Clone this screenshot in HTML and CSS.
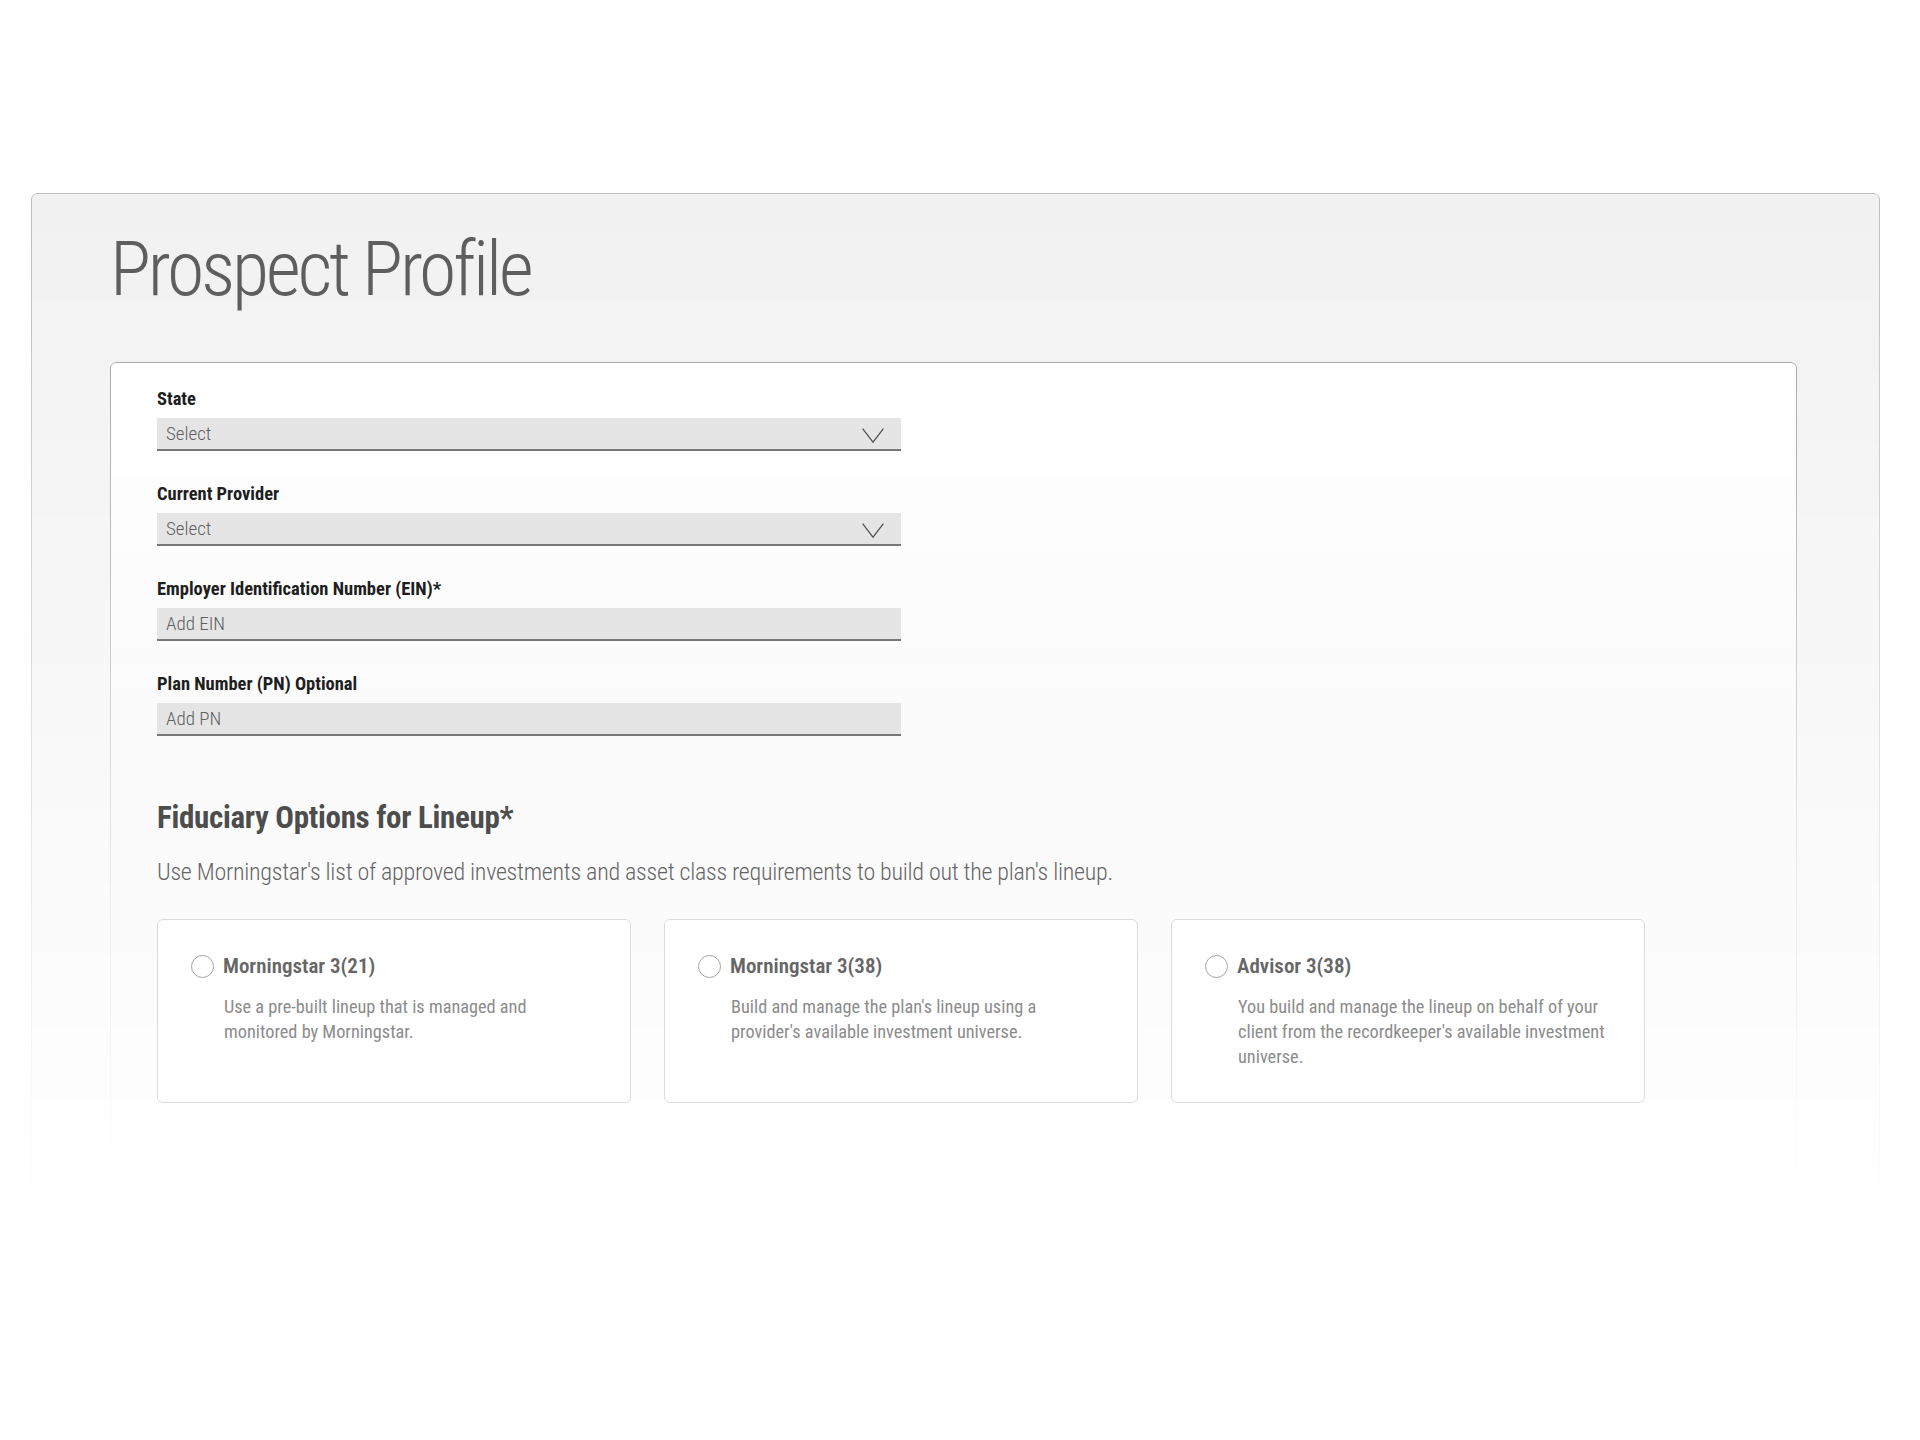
FILE: index.html
```html
<!DOCTYPE html>
<html lang="en">
<head>
<meta charset="utf-8">
<title>Prospect Profile</title>
<link rel="stylesheet" href="styles.css">
</head>
<body>
<main class="page-card">
  <h1 class="page-title">Prospect Profile</h1>
  <section class="form-card">
    <div class="fields">
      <div class="field">
        <label class="field-label">State</label>
        <div class="select-box">
          <span class="field-value">Select</span>
          <svg class="chevron" width="22" height="15" viewBox="0 0 22 15"><polyline points="0.6,0.6 11,14.2 21.4,0.6" fill="none" stroke="#555" stroke-width="1.3"/></svg>
        </div>
      </div>
      <div class="field">
        <label class="field-label">Current Provider</label>
        <div class="select-box">
          <span class="field-value">Select</span>
          <svg class="chevron" width="22" height="15" viewBox="0 0 22 15"><polyline points="0.6,0.6 11,14.2 21.4,0.6" fill="none" stroke="#555" stroke-width="1.3"/></svg>
        </div>
      </div>
      <div class="field">
        <label class="field-label">Employer Identification Number (EIN)*</label>
        <div class="select-box"><span class="field-value">Add EIN</span></div>
      </div>
      <div class="field">
        <label class="field-label">Plan Number (PN) Optional</label>
        <div class="select-box"><span class="field-value">Add PN</span></div>
      </div>
    </div>

    <h2 class="section-title">Fiduciary Options for Lineup*</h2>
    <p class="section-desc">Use Morningstar's list of approved investments and asset class requirements to build out the plan's lineup.</p>

    <div class="options">
      <div class="option-card">
        <div class="option-head"><span class="radio"></span><span class="option-title">Morningstar 3(21)</span></div>
        <p class="option-desc">Use a pre-built lineup that is managed and monitored by Morningstar.</p>
      </div>
      <div class="option-card">
        <div class="option-head"><span class="radio"></span><span class="option-title">Morningstar 3(38)</span></div>
        <p class="option-desc">Build and manage the plan's lineup using a provider's available investment universe.</p>
      </div>
      <div class="option-card">
        <div class="option-head"><span class="radio"></span><span class="option-title">Advisor 3(38)</span></div>
        <p class="option-desc">You build and manage the lineup on behalf of your client from the recordkeeper's available investment universe.</p>
      </div>
    </div>
  </section>
</main>
</body>
</html>
```

FILE: styles.css
```css
* { box-sizing: border-box; }

html, body {
  margin: 0;
  padding: 0;
  background: #ffffff;
}

body {
  font-family: "Roboto", "Liberation Sans", sans-serif;
  font-stretch: 75%;
  color: #333;
}

.page-card {
  position: relative;
  z-index: 0;
  margin: 193px 40px 0 31px;
  padding: 38px 83px 4px 79px;
}

.page-card::before {
  content: "";
  position: absolute;
  inset: 0;
  z-index: -1;
  border: 1px solid #bdbdbd;
  border-radius: 6px;
  background: #f1f1f1;
  -webkit-mask-image: linear-gradient(to bottom, #000 0%, rgba(0,0,0,0.6) 40%, transparent 100%);
  mask-image: linear-gradient(to bottom, #000 0%, rgba(0,0,0,0.6) 40%, transparent 100%);
}

.page-title {
  margin: 0 0 55px 0;
  font-weight: 300;
  font-size: 76px;
  line-height: 76px;
  letter-spacing: -3.1px;
  color: #5e5e5e;
}

.form-card {
  position: relative;
  z-index: 0;
  padding: 26px 47px 100px 47px;
}

.form-card::before {
  content: "";
  position: absolute;
  inset: 0;
  z-index: -1;
  border: 1px solid #a8a8a8;
  border-radius: 6px;
  background: #ffffff;
  -webkit-mask-image: linear-gradient(to bottom, #000 0%, rgba(0,0,0,0.15) 65%, transparent 100%);
  mask-image: linear-gradient(to bottom, #000 0%, rgba(0,0,0,0.15) 65%, transparent 100%);
}

.fields {
  display: flex;
  flex-direction: column;
  gap: 32px;
  width: 744px;
}

.field-label {
  display: block;
  margin-bottom: 8px;
  font-weight: 700;
  font-size: 18.5px;
  line-height: 22px;
  color: #1e1e1e;
}

.select-box {
  display: flex;
  align-items: center;
  justify-content: space-between;
  height: 33px;
  padding: 1px 17px 0 9px;
  background: #e5e5e5;
  border-bottom: 2px solid #777;
}

.field-value {
  font-weight: 300;
  font-size: 19px;
  line-height: 30px;
  color: #5f5f5f;
}

.chevron {
  display: block;
  margin-top: 2px;
}

.section-title {
  margin: 63px 0 20px 0;
  font-weight: 700;
  font-size: 31px;
  line-height: 38px;
  letter-spacing: -0.3px;
  color: #4d4d4d;
}

.section-desc {
  margin: 0 0 32px 0;
  font-weight: 300;
  font-size: 24px;
  line-height: 30px;
  letter-spacing: -0.27px;
  color: #666;
}

.options {
  display: flex;
  gap: 33px;
}

.option-card {
  width: 474px;
  height: 184px;
  padding: 33px 33px 0 33px;
  border: 1px solid #dcdcdc;
  border-radius: 6px;
  background: #fff;
}

.option-head {
  display: flex;
  align-items: center;
  gap: 9px;
  height: 26px;
}

.radio {
  flex: none;
  width: 23px;
  height: 23px;
  border: 1.5px solid #a4a4a4;
  border-radius: 50%;
  background: #fff;
}

.option-title {
  font-weight: 600;
  font-size: 21px;
  line-height: 26px;
  color: #666;
}

.option-desc {
  margin: 15px 0 0 33px;
  font-weight: 400;
  font-size: 18.3px;
  line-height: 25px;
  color: #8c8c8c;
}
```
